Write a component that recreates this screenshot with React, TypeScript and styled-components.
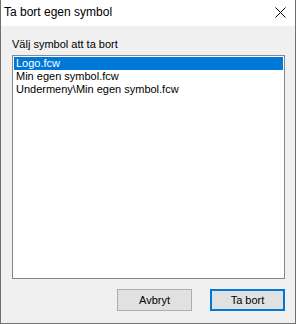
import React from "react";
import styled, { createGlobalStyle } from "styled-components";

const GlobalStyle = createGlobalStyle`
  html, body {
    margin: 0;
    padding: 0;
    background: #ffffff;
  }
  body {
    font-family: "Liberation Sans", Arial, sans-serif;
    font-size: 11px;
    color: #000;
  }
`;

const Window = styled.div`
  width: 296px;
  height: 324px;
  box-sizing: border-box;
  border: 1px solid #6f6f6f;
  border-top: none;
  background: #f0f0f0;
  display: flex;
  flex-direction: column;
`;

const TitleBar = styled.div`
  height: 26px;
  background: #ffffff;
  display: flex;
  align-items: center;
  justify-content: space-between;
  padding: 0 9px 0 3px;
`;

const Title = styled.span`
  font-size: 12px;
  line-height: 16px;
  margin-top: -2px;
`;

const CloseButton = styled.div`
  width: 12px;
  height: 12px;
  display: flex;
  align-items: center;
  justify-content: center;
  margin-top: -1px;
`;

const Body = styled.div`
  flex: 1;
  display: flex;
  flex-direction: column;
  padding: 10px 10px 12px 11px;
`;

const Label = styled.div`
  line-height: 16px;
  margin-bottom: 3px;
`;

const ListBox = styled.div`
  height: 224px;
  box-sizing: border-box;
  border: 1px solid #828790;
  background: #ffffff;
  padding: 1px;
`;

const Item = styled.div<{ $selected?: boolean }>`
  height: 13px;
  line-height: 13px;
  padding-left: 2px;
  white-space: nowrap;
  overflow: hidden;
  background: ${(p) => (p.$selected ? "#0078d7" : "transparent")};
  color: ${(p) => (p.$selected ? "#ffffff" : "#000000")};
`;

const ButtonRow = styled.div`
  display: flex;
  justify-content: flex-end;
  gap: 18px;
  margin-top: 10px;
`;

const Button = styled.button<{ $default?: boolean }>`
  width: 75px;
  height: 22px;
  box-sizing: border-box;
  font-family: inherit;
  font-size: 11px;
  color: #000;
  background: #e1e1e1;
  border: ${(p) => (p.$default ? "2px solid #0078d7" : "1px solid #adadad")};
  padding: 0;
  margin: 0;
`;

const items = ["Logo.fcw", "Min egen symbol.fcw", "Undermeny\\Min egen symbol.fcw"];

export default function App() {
  return (
    <>
      <GlobalStyle />
      <Window>
        <TitleBar>
          <Title>Ta bort egen symbol</Title>
          <CloseButton>
            <svg width="11" height="11" viewBox="0 0 11 11">
              <path d="M0.5 0.5 L10.5 10.5 M10.5 0.5 L0.5 10.5" stroke="#000" strokeWidth="1" />
            </svg>
          </CloseButton>
        </TitleBar>
        <Body>
          <Label>Välj symbol att ta bort</Label>
          <ListBox>
            {items.map((it, i) => (
              <Item key={it} $selected={i === 0}>
                {it}
              </Item>
            ))}
          </ListBox>
          <ButtonRow>
            <Button>Avbryt</Button>
            <Button $default>Ta bort</Button>
          </ButtonRow>
        </Body>
      </Window>
    </>
  );
}
